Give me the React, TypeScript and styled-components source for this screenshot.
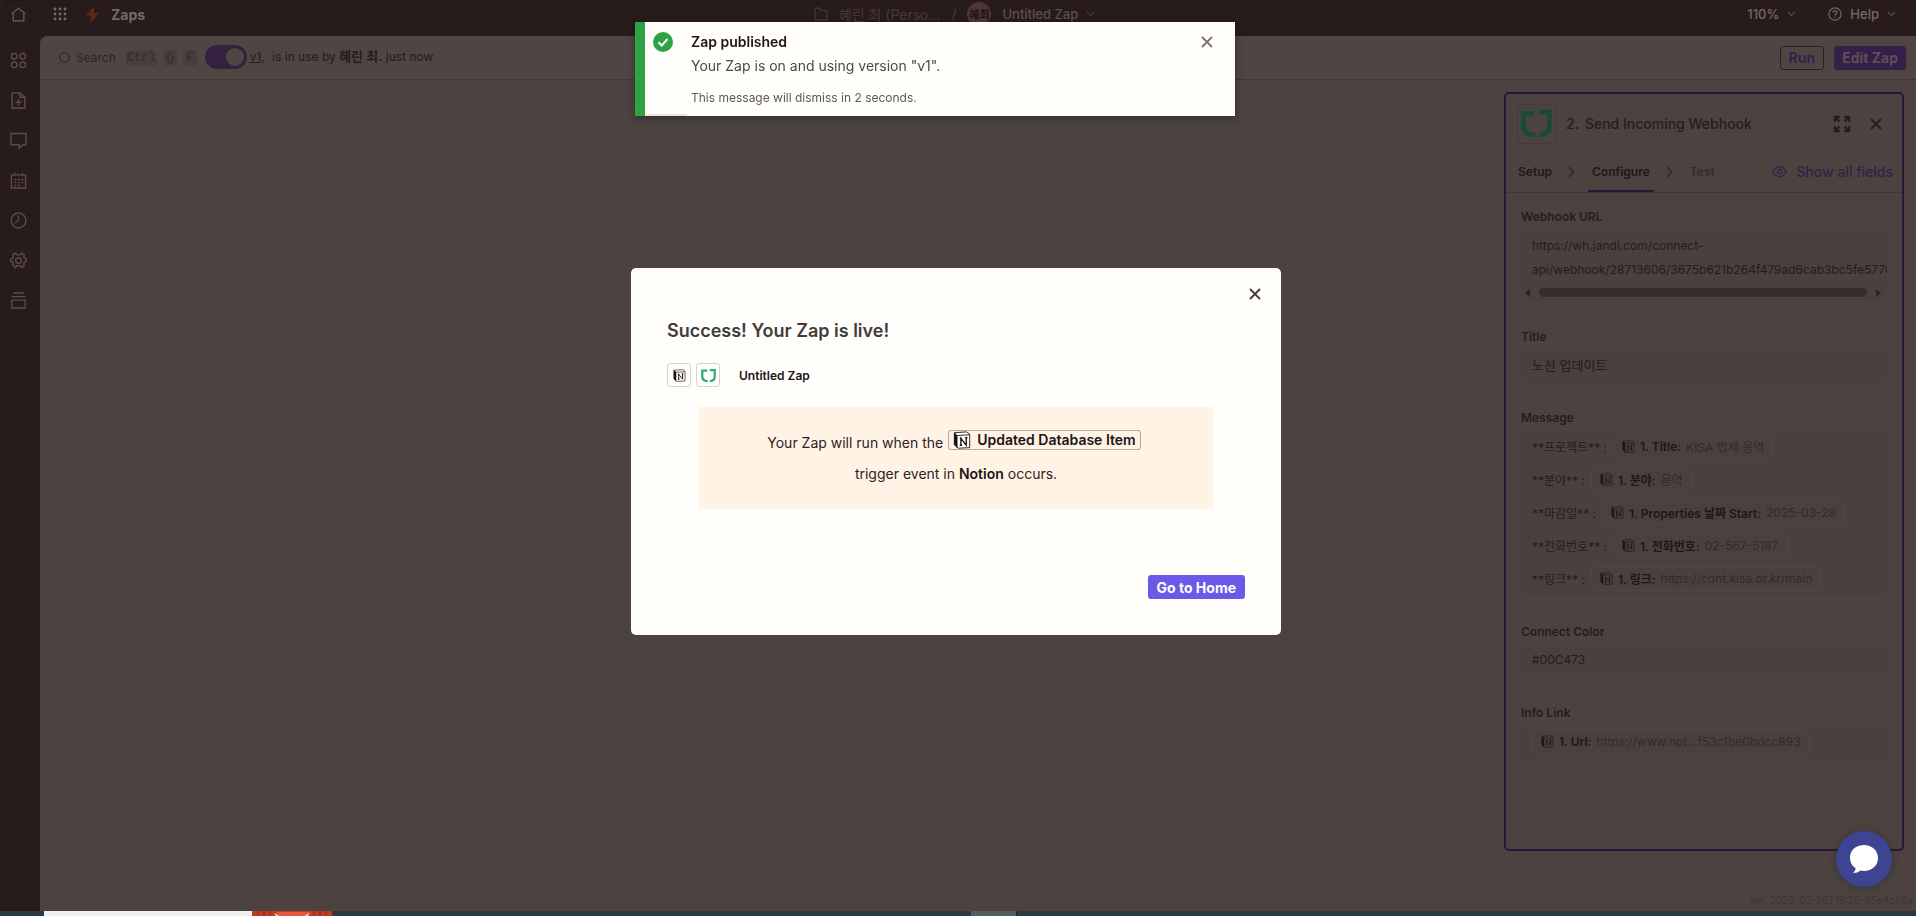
import React from "react";
import styled, { createGlobalStyle } from "styled-components";

const Global = createGlobalStyle`
  *, *::before, *::after { box-sizing: border-box; }
  html, body { margin: 0; }
  body {
    background: #4c4341;
    color: #281b1b;
    font-family: Inter, "Noto Sans CJK KR", sans-serif;
    font-size: 13px;
    overflow: hidden;
  }
  button, input, textarea { font: inherit; color: inherit; }
  button { padding: 0; border: 0; background: none; display: inline-flex; align-items: center; justify-content: center; }
  svg { display: block; flex: none; }
  h1, h2, p { margin: 0; }
  a { color: inherit; }
`;

const Screen = styled.div`
  display: flex;
  flex-direction: column;
  min-height: 100vh;
`;
const Shell = styled.div`
  display: flex;
  flex: 1;
  background: #281b1b;
`;
const Sidebar = styled.nav`
  width: 40px;
  flex: none;
  display: flex;
  flex-direction: column;
  align-items: flex-start;
`;
const SideButton = styled.button<{ $active?: boolean }>`
  width: 36px;
  height: ${p => (p.$active ? 28 : 40)}px;
  margin-bottom: ${p => (p.$active ? 12 : 0)}px;
  color: ${p => (p.$active ? "#6d5f5b" : "#5a4c49")};
`;
const ActiveFrame = styled.span`
  width: 26px;
  height: 28px;
  border: 1px solid #211616;
  display: flex;
  align-items: center;
  justify-content: center;
`;
const Main = styled.div`
  flex: 1;
  min-width: 0;
  display: flex;
  flex-direction: column;
`;
const TopBar = styled.header`
  height: 36px;
  padding: 0 20px 8px 13px;
  display: grid;
  grid-template-columns: 1fr auto 1fr;
  align-items: center;
  color: #75676a;
  font-size: 13px;
  font-weight: 500;
`;
const Cluster = styled.div<{ $gap: number; $end?: boolean }>`
  display: flex;
  align-items: center;
  gap: ${p => p.$gap}px;
  justify-content: ${p => (p.$end ? "flex-end" : "flex-start")};
`;
const AppName = styled.h1`
  font-size: 14px;
  font-weight: 700;
  color: #75676a;
`;
const Crumbs = styled(Cluster)`
  margin-right: 40px;
  color: #483939;
  white-space: nowrap;
`;
const FolderName = styled.span`
  font-size: 14px;
  font-weight: 400;
`;
const Avatar = styled.span`
  width: 24px;
  height: 24px;
  border-radius: 50%;
  background: #4e3438;
  color: #1d1113;
  font-size: 11px;
  font-weight: 600;
  display: flex;
  align-items: center;
  justify-content: center;
`;
const MenuButton = styled.button<{ $gap: number; $dim?: boolean }>`
  gap: ${p => p.$gap}px;
  color: ${p => (p.$dim ? "#5e4f4f" : "inherit")};
`;
const Workspace = styled.section`
  flex: 1;
  display: flex;
  flex-direction: column;
  background: #4c4341;
  border-top-left-radius: 8px;
`;
const ToolBar = styled.div`
  height: 44px;
  padding: 0 10px 0 18px;
  display: flex;
  align-items: center;
  background: #4f4542;
  border-bottom: 1px solid #403735;
  border-top-left-radius: 8px;
`;
const SearchButton = styled.button`
  gap: 6px;
  font-size: 12px;
  color: #2f2322;
`;
const Kbd = styled.kbd`
  height: 16px;
  min-width: 14px;
  padding: 0 1px;
  border-radius: 3px;
  background: #483e3b;
  font: 12px/16px "Liberation Mono", monospace;
  display: flex;
  align-items: center;
  justify-content: center;
`;
const Keys = styled.span`
  display: flex;
  gap: 6px;
  margin: 0 8px 0 10px;
  color: #33282a;
`;
const Switch = styled.input`
  appearance: none;
  width: 42px;
  height: 24px;
  margin: 0 3px 2px 0;
  border-radius: 12px;
  background: #34203f;
  display: flex;
  &::before {
    content: "";
    width: 18px;
    height: 18px;
    margin: 3px 3px 3px auto;
    border-radius: 50%;
    background: #4f4542;
  }
`;
const Status = styled.p`
  padding-bottom: 4px;
  font-size: 12px;
  a { margin-right: 4px; }
  b { font-weight: 600; font-size: 13px; }
`;
const Actions = styled.div`
  margin-left: auto;
  display: flex;
  gap: 10px;
`;
const ActionButton = styled.button<{ $solid?: boolean }>`
  height: 24px;
  padding: 0 ${p => (p.$solid ? 7 : 8)}px;
  border: 1px solid ${p => (p.$solid ? "#34204a" : "#2c1f2c")};
  border-radius: 3px;
  background: ${p => (p.$solid ? "#34204a" : "transparent")};
  color: ${p => (p.$solid ? "#5c4f58" : "#34204a")};
  font-size: 14px;
  font-weight: 700;
`;
const Canvas = styled.div`
  flex: 1;
  padding: 12px 12px 0;
  display: flex;
  flex-direction: column;
  align-items: flex-end;
`;
const Panel = styled.aside`
  width: 400px;
  flex: 1;
  border: 2px solid #281838;
  border-radius: 5px;
  display: flex;
  flex-direction: column;
`;
const PanelHead = styled.div`
  height: 59px;
  padding: 0 20px 0 11px;
  display: flex;
  align-items: center;
`;
const LogoBox = styled.span`
  width: 39px;
  height: 40px;
  margin-right: 10px;
  border: 1px solid #443a38;
  border-radius: 4px;
  display: flex;
  align-items: center;
  justify-content: center;
`;
const PanelTitle = styled.h2`
  flex: 1;
  font-size: 14px;
  font-weight: 500;
  display: flex;
  gap: 6px;
  color: #281b1b;
`;
const Tabs = styled.div`
  height: 40px;
  padding: 0 9px 0 8px;
  display: flex;
  align-items: stretch;
  border-bottom: 1px solid #3f3534;
  color: #30242a;
`;
const Tab = styled.button<{ $state?: "on" | "off" }>`
  padding: 0 4px;
  font-size: 12px;
  font-weight: 600;
  color: ${p => (p.$state === "off" ? "#372c2b" : "#221616")};
  border-bottom: 2px solid ${p => (p.$state === "on" ? "#281838" : "transparent")};
`;
const Sep = styled.span`
  width: 32px;
  padding-bottom: 2px;
  display: flex;
  align-items: center;
  justify-content: center;
`;
const ShowAll = styled.button`
  margin-left: auto;
  padding-bottom: 2px;
  gap: 9px;
  color: #34204a;
  font-size: 14px;
  font-weight: 500;
`;
const Fields = styled.div`
  padding: 14px 15px;
  display: flex;
  flex-direction: column;
  gap: 26px;
`;
const Field = styled.div`
  display: flex;
  flex-direction: column;
`;
const Label = styled.label`
  height: 23px;
  line-height: 20px;
  font-size: 12px;
  font-weight: 600;
`;
const Box = styled.div`
  background: #4a403e;
  border-radius: 3px;
  overflow: hidden;
`;
const TextInput = styled.input<{ $size?: number }>`
  width: 100%;
  height: 32px;
  padding: 0 11px 3px;
  border: 0;
  border-radius: 3px;
  background: #4a403e;
  font-size: ${p => p.$size ?? 12}px;
`;
const UrlArea = styled.textarea`
  display: block;
  width: 100%;
  height: 54px;
  padding: 4px 0 0 11px;
  border: 0;
  background: transparent;
  font-size: 12px;
  line-height: 24px;
  white-space: pre;
  overflow: hidden;
  resize: none;
`;
const ScrollBar = styled.div`
  height: 17px;
  padding: 0 6px 0 4px;
  display: flex;
  align-items: center;
  gap: 9px;
  color: #2d2221;
`;
const Thumb = styled.div`
  flex: 1;
  height: 9px;
  border-radius: 5px;
  background: #362c2b;
`;
const Line = styled.div`
  height: 33px;
  padding: 0 0 2px 11px;
  display: flex;
  align-items: center;
  gap: 6px;
  font-size: 12px;
  white-space: nowrap;
`;
const Chip = styled.span`
  height: 25px;
  padding: 0 8px;
  border: 1px solid #504643;
  border-radius: 3px;
  display: inline-flex;
  align-items: center;
  gap: 5px;
  color: #221616;
  b { font-weight: 600; }
`;
const ChipValue = styled.span`
  color: #352a29;
`;
const Version = styled.footer`
  height: 60px;
  padding: 39px 3px 0 0;
  margin-right: -12px;
  color: #3e3332;
  font-size: 10px;
  line-height: 20px;
`;
const TaskBar = styled.div`
  height: 5px;
  padding-left: 44px;
  display: flex;
  background: #2b3a42;
`;
const TaskSearch = styled.div`
  width: 208px;
  background: #f0f0f0;
`;
const TaskGap = styled.div`
  flex: 1;
`;
const TaskWindow = styled.div`
  width: 46px;
  margin-right: 899px;
  background: #535d5f;
  border-right: 1px solid #1d272c;
`;
const Toast = styled.div`
  position: fixed;
  top: 22px;
  left: 635px;
  right: 681px;
  height: 94px;
  padding: 10px 20px 0 8px;
  border-left: 10px solid #2fa243;
  background: #fffefb;
  box-shadow: 0 3px 8px rgba(0, 0, 0, 0.3);
  display: flex;
  align-items: flex-start;
  gap: 18px;
`;
const ToastBody = styled.div`
  flex: 1;
  color: #4d4946;
  line-height: 24px;
  font-size: 14px;
`;
const ToastTitle = styled.h2`
  margin-bottom: 2px;
  font-size: 14px;
  line-height: 20px;
  font-weight: 600;
  color: #201515;
`;
const ToastNote = styled.p`
  margin-top: 8px;
  font-size: 12px;
  color: #5d5855;
`;
const CloseButton = styled.button<{ $soft?: boolean }>`
  width: 16px;
  height: 20px;
  color: ${p => (p.$soft ? "#77736f" : "#403d39")};
`;
const Progress = styled.div`
  position: absolute;
  left: 0;
  bottom: 0;
  width: 42px;
  height: 2px;
  background: #e8e6e4;
`;
const ModalLayer = styled.div`
  position: fixed;
  inset: 0 4px 13px 0;
  display: flex;
  align-items: center;
  justify-content: center;
`;
const Modal = styled.div`
  width: 650px;
  padding: 16px 36px 36px;
  border-radius: 5px;
  background: #fffefb;
  display: flex;
  flex-direction: column;
`;
const ModalClose = styled(CloseButton)`
  align-self: flex-end;
  margin-right: -18px;
`;
const ModalTitle = styled.h2`
  margin-top: 12px;
  font-size: 18px;
  line-height: 30px;
  font-weight: 600;
  color: #403d39;
`;
const ZapRow = styled.div`
  margin-top: 17px;
  display: flex;
  align-items: center;
  gap: 5px;
  font-size: 12px;
  font-weight: 600;
  color: #201515;
  strong { margin-left: 14px; font-weight: 600; }
`;
const AppIcon = styled.span`
  width: 24px;
  height: 24px;
  border: 1px solid #d7d3c9;
  border-radius: 3px;
  display: flex;
  align-items: center;
  justify-content: center;
`;
const Notice = styled.div`
  margin: 20px 32px 0;
  height: 102px;
  padding-top: 20px;
  background: #fff3e6;
  text-align: center;
  font-size: 14px;
  line-height: 31px;
  color: #2b2321;
  b { font-weight: 600; color: #201515; }
`;
const EventTag = styled.b`
  height: 20px;
  margin: 0 4px 0 1px;
  padding: 0 4px;
  border: 1px solid #b5a9a0;
  border-radius: 3px;
  display: inline-flex;
  align-items: center;
  gap: 6px;
  line-height: 18px;
  vertical-align: -1px;
`;
const HomeButton = styled.button`
  align-self: flex-end;
  height: 24px;
  margin-top: 66px;
  padding: 0 9px;
  border-radius: 3px;
  background: #695be8;
  color: #fffefb;
  font-size: 14px;
  font-weight: 700;
`;
const ChatButton = styled.button`
  position: fixed;
  right: 24px;
  bottom: 29px;
  width: 56px;
  height: 56px;
  border-radius: 50%;
  background: #3d4592;
  box-shadow: 0 1px 8px rgba(0, 0, 0, 0.25);
`;

const Stroke = ({ size = 16, w = 2, children }: { size?: number; w?: number; children: React.ReactNode }) => (
  <svg width={size} height={size} viewBox="0 0 24 24" fill="none" stroke="currentColor" strokeWidth={w}>{children}</svg>
);
const Chevron = () => (
  <svg width="9" height="6" viewBox="0 0 9 6" fill="none" stroke="currentColor" strokeWidth="1.2" opacity="0.6"><path d="M1 1l3.5 3.5L8 1" /></svg>
);
const ChevronRight = () => (
  <svg width="7" height="12" viewBox="0 0 7 12" fill="none" stroke="currentColor" strokeWidth="1.3"><path d="M1 1l4.500 5L1 11" /></svg>
);
const Cross = ({ size = 12 }: { size?: number }) => (
  <svg width={size} height={size} viewBox="0 0 12 12" fill="none" stroke="currentColor" strokeWidth="1.8"><path d="M1 1l10 10M11 1L1 11" /></svg>
);
const Bracket = ({ size, color }: { size: number; color: string }) => (
  <svg width={size} height={size} viewBox="0 0 30 30" fill="none" stroke={color} strokeWidth="4.5">
    <path d="M12.500 5H2.500V17q0 9 11 9" />
    <path d="M17.500 4h10V17q0 9-10 9" />
  </svg>
);
const NotionIcon = ({ size = 14, page = "none" }: { size?: number; page?: string }) => (
  <svg width={size} height={size} viewBox="0 0 16 16" fill={page} stroke="currentColor">
    <path d="M1.500 1.500L12 .8l2.800 2v12L4.500 15.300 1.500 12z" strokeWidth="0.8" />
    <path d="M1 1.500l2.800 2.300V15L1 12z" fill="currentColor" strokeWidth="0.4" />
    <path d="M4 4l10.500-.6" strokeWidth="0.8" />
    <path d="M7 12.500V6.500l4.800 6V6M6 6.300h1.600M10.800 6h2M6 12.700h2" strokeWidth="1.200" />
  </svg>
);

const sideIcons: { name: string; art: React.ReactNode }[] = [
  { name: "Discover", art: <><circle cx="6" cy="6" r="4" /><circle cx="18" cy="6" r="4" /><circle cx="6" cy="18" r="4" /><circle cx="18" cy="18" r="4" /></> },
  { name: "Create", art: <><path d="M3 1.500h11l7 6V22.500H3z" /><path d="M14 1.500v6h7M12 10v9M7.500 14.500h9" /></> },
  { name: "Chat", art: <path d="M1.500 2h21v16H18l-5 5v-5H1.500z" /> },
  { name: "Schedule", art: <><path d="M2 4h20v18.500H2zM6.500 1v5M17.500 1v5" /><path d="M6 11h3M11 11h3M16 11h3M6 15h3M11 15h3M16 15h3M6 19h3M11 19h3" /></> },
  { name: "History", art: <><circle cx="12" cy="12" r="10.500" /><path d="M12 5v7l-5 3.500" /></> },
  { name: "Settings", art: <><path d="M7.500 1.500L9.500 4h5l2-2.500 3.500 2.500-.5 3.500 3.500 3v3l-3.500 2 .5 4-3.500 2.500-2-2.500h-5l-2 2.500L4 18l.5-3L1 12.500v-2l3.500-2.500L4 4z" /><circle cx="12" cy="12" r="4" /></> },
  { name: "More", art: <path d="M4.500 1.500h15M2 6.500h20M2.500 11.500h19v11h-19z" /> },
];

const message = [
  { label: "**프로젝트** :", key: "1. Title:", value: "KISA 법제 용역" },
  { label: "**분야** :", key: "1. 분야:", value: "용역" },
  { label: "**마감일** :", key: "1. Properties 날짜 Start:", value: "2025-03-28" },
  { label: "**전화번호** :", key: "1. 전화번호:", value: "02-567-5187" },
  { label: "**링크** :", key: "1. 링크:", value: "https://cont.kisa.or.kr/main" },
];

const Token = ({ name, value }: { name: string; value: string }) => (
  <Chip><NotionIcon size={13} /><b>{name}</b><ChipValue>{value}</ChipValue></Chip>
);

export default function App() {
  return (
    <>
      <Global />
      <Screen>
        <Shell>
          <Sidebar>
            <SideButton $active aria-label="Home">
              <ActiveFrame><Stroke size={15}><path d="M1 11L12 2l11 9M3.500 9.500V22h17V9.500" /></Stroke></ActiveFrame>
            </SideButton>
            {sideIcons.map(i => (
              <SideButton key={i.name} aria-label={i.name}><Stroke size={17}>{i.art}</Stroke></SideButton>
            ))}
          </Sidebar>
          <Main>
            <TopBar>
              <Cluster $gap={12}>
                <Cluster $gap={19}>
                  <button aria-label="Apps">
                    <svg width="14" height="14" viewBox="0 0 14 14" fill="currentColor">
                      {[2, 7, 12].map(y => [2, 7, 12].map(x => <circle key={x + "-" + y} cx={x} cy={y} r="1.400" />))}
                    </svg>
                  </button>
                  <svg width="13" height="17" viewBox="0 0 13 17" fill="#5f2814"><path d="M8 0L0 9.500h5L4 17l9-10H8z" /></svg>
                </Cluster>
                <AppName>Zaps</AppName>
              </Cluster>
              <Crumbs $gap={11}>
                <Stroke size={14}><path d="M2 2h7l3 4h10v16H2z" /></Stroke>
                <FolderName>혜린 최 (Perso...</FolderName>
                <span>/</span>
                <Avatar>혜최</Avatar>
                <MenuButton $gap={8} $dim>Untitled Zap <Chevron /></MenuButton>
              </Crumbs>
              <Cluster $gap={32} $end>
                <MenuButton $gap={8}>110% <Chevron /></MenuButton>
                <MenuButton $gap={8}>
                  <Stroke size={14}><circle cx="12" cy="12" r="10.500" /><path d="M8.500 9.500q0-3 3.500-3t3.500 3q0 2-3.500 3.500v1.500M12 16.500v2" /></Stroke>
                  Help <Chevron />
                </MenuButton>
              </Cluster>
            </TopBar>
            <Workspace>
              <ToolBar>
                <SearchButton>
                  <Stroke size={12}><circle cx="13" cy="11" r="9.500" /><path d="M3 21l-2 2" /></Stroke>
                  Search
                </SearchButton>
                <Keys>
                  <Kbd>Ctrl</Kbd>
                  <Kbd aria-label="Shift">
                    <svg width="10" height="12" viewBox="0 0 10 12" fill="none" stroke="currentColor"><path d="M5 1l4 4H7v6H3V5H1z" /></svg>
                  </Kbd>
                  <Kbd>F</Kbd>
                </Keys>
                <Switch type="checkbox" defaultChecked aria-label="Zap on" />
                <Status><a href="#v1">v1,</a> is in use by <b>혜린 최.</b> just now</Status>
                <Actions>
                  <ActionButton>Run</ActionButton>
                  <ActionButton $solid>Edit Zap</ActionButton>
                </Actions>
              </ToolBar>
              <Canvas>
                <Panel>
                  <PanelHead>
                    <LogoBox><Bracket size={31} color="#194b34" /></LogoBox>
                    <PanelTitle><span>2.</span><span>Send Incoming Webhook</span></PanelTitle>
                    <Cluster $gap={19}>
                      <button aria-label="Expand">
                        <Stroke size={18} w={3}><path d="M2.500 9V2.500H9M2.500 2.500l6 6M15 2.500h6.500V9M21.500 2.500l-6 6M2.500 15v6.500H9M2.500 21.500l6-6M21.500 15v6.500H15M21.500 21.500l-6-6" /></Stroke>
                      </button>
                      <button aria-label="Close panel"><Cross /></button>
                    </Cluster>
                  </PanelHead>
                  <Tabs>
                    <Tab>Setup</Tab><Sep><ChevronRight /></Sep>
                    <Tab $state="on">Configure</Tab><Sep><ChevronRight /></Sep>
                    <Tab $state="off">Test</Tab>
                    <ShowAll>
                      <Stroke size={15}><path d="M1 12q5-8 11-8t11 8q-5 8-11 8T1 12z" /><circle cx="12" cy="12" r="3.500" /></Stroke>
                      Show all fields
                    </ShowAll>
                  </Tabs>
                  <Fields>
                    <Field>
                      <Label htmlFor="url">Webhook URL</Label>
                      <Box>
                        <UrlArea id="url" readOnly wrap="off" value={"https://wh.jandi.com/connect-\napi/webhook/28713606/3675b621b264f479ad6cab3bc5fe5770"} />
                        <ScrollBar>
                          <svg width="5" height="8" viewBox="0 0 5 8" fill="currentColor"><path d="M5 0v8L0 4z" /></svg>
                          <Thumb />
                          <svg width="5" height="8" viewBox="0 0 5 8" fill="currentColor"><path d="M0 0v8l5-4z" /></svg>
                        </ScrollBar>
                      </Box>
                    </Field>
                    <Field>
                      <Label htmlFor="title">Title</Label>
                      <TextInput id="title" $size={13} defaultValue="노션 업데이트" />
                    </Field>
                    <Field>
                      <Label as="span" id="message">Message</Label>
                      <Box role="textbox" aria-labelledby="message">
                        {message.map(m => <Line key={m.key}><span>{m.label}</span><Token name={m.key} value={m.value} /></Line>)}
                      </Box>
                    </Field>
                    <Field>
                      <Label htmlFor="color">Connect Color</Label>
                      <TextInput id="color" defaultValue="#00C473" />
                    </Field>
                    <Field>
                      <Label as="span" id="link">Info Link</Label>
                      <Box role="textbox" aria-labelledby="link">
                        <Line><Token name="1. Url:" value="https://www.not...f53c1be0bdcc893" /></Line>
                      </Box>
                    </Field>
                  </Fields>
                </Panel>
                <Version>ver. 2025-03-26T18:29-65e4c66a</Version>
              </Canvas>
            </Workspace>
          </Main>
        </Shell>
        <TaskBar>
          <TaskSearch />
          <svg width="80" height="5" viewBox="0 0 80 5">
            <rect width="80" height="5" fill="#c23a20" />
            <path d="M6 0v5M12 0v5M18 0v5M62 0v5M68 0v5M74 0v5" stroke="#a32c18" strokeWidth="2" />
            <path d="M24 1h34l-3 4H28z" fill="#e8573a" />
            <path d="M22 2l6 3h-4zM58 2l-6 3h4z" fill="#f5d9d0" />
          </svg>
          <TaskGap />
          <TaskWindow />
        </TaskBar>
      </Screen>
      <ChatButton aria-label="Open chat">
        <svg width="30" height="30" viewBox="0 0 30 30" fill="#fff"><path d="M15 1C7 1 1 6 1 13.500c0 5 2 8.500 5.500 10.500.2 2-.8 3.500-2.500 5 3 0 5.500-.8 7.500-2.500 1.200.3 2.300.5 3.500.5 8 0 14-5.500 14-13S23 1 15 1z" /></svg>
      </ChatButton>
      <ModalLayer>
        <Modal role="dialog" aria-labelledby="done">
          <ModalClose aria-label="Close"><Cross /></ModalClose>
          <ModalTitle id="done">Success! Your Zap is live!</ModalTitle>
          <ZapRow>
            <AppIcon><NotionIcon size={13} page="#fff" /></AppIcon>
            <AppIcon><Bracket size={15} color="#27ae7a" /></AppIcon>
            <strong>Untitled Zap</strong>
          </ZapRow>
          <Notice>
            Your Zap will run when the <EventTag><NotionIcon size={18} page="#fff" />Updated Database Item</EventTag>
            <br />
            trigger event in <b>Notion</b> occurs.
          </Notice>
          <HomeButton>Go to Home</HomeButton>
        </Modal>
      </ModalLayer>
      <Toast role="status">
        <svg width="20" height="20" viewBox="0 0 20 20"><circle cx="10" cy="10" r="10" fill="#2fa243" /><path d="M5.500 10.300l3.200 3.200L14.500 7" fill="none" stroke="#fffefb" strokeWidth="2" /></svg>
        <ToastBody>
          <ToastTitle>Zap published</ToastTitle>
          <p>Your Zap is on and using version "v1".</p>
          <ToastNote>This message will dismiss in 2 seconds.</ToastNote>
        </ToastBody>
        <CloseButton $soft aria-label="Dismiss"><Cross /></CloseButton>
        <Progress />
      </Toast>
    </>
  );
}
